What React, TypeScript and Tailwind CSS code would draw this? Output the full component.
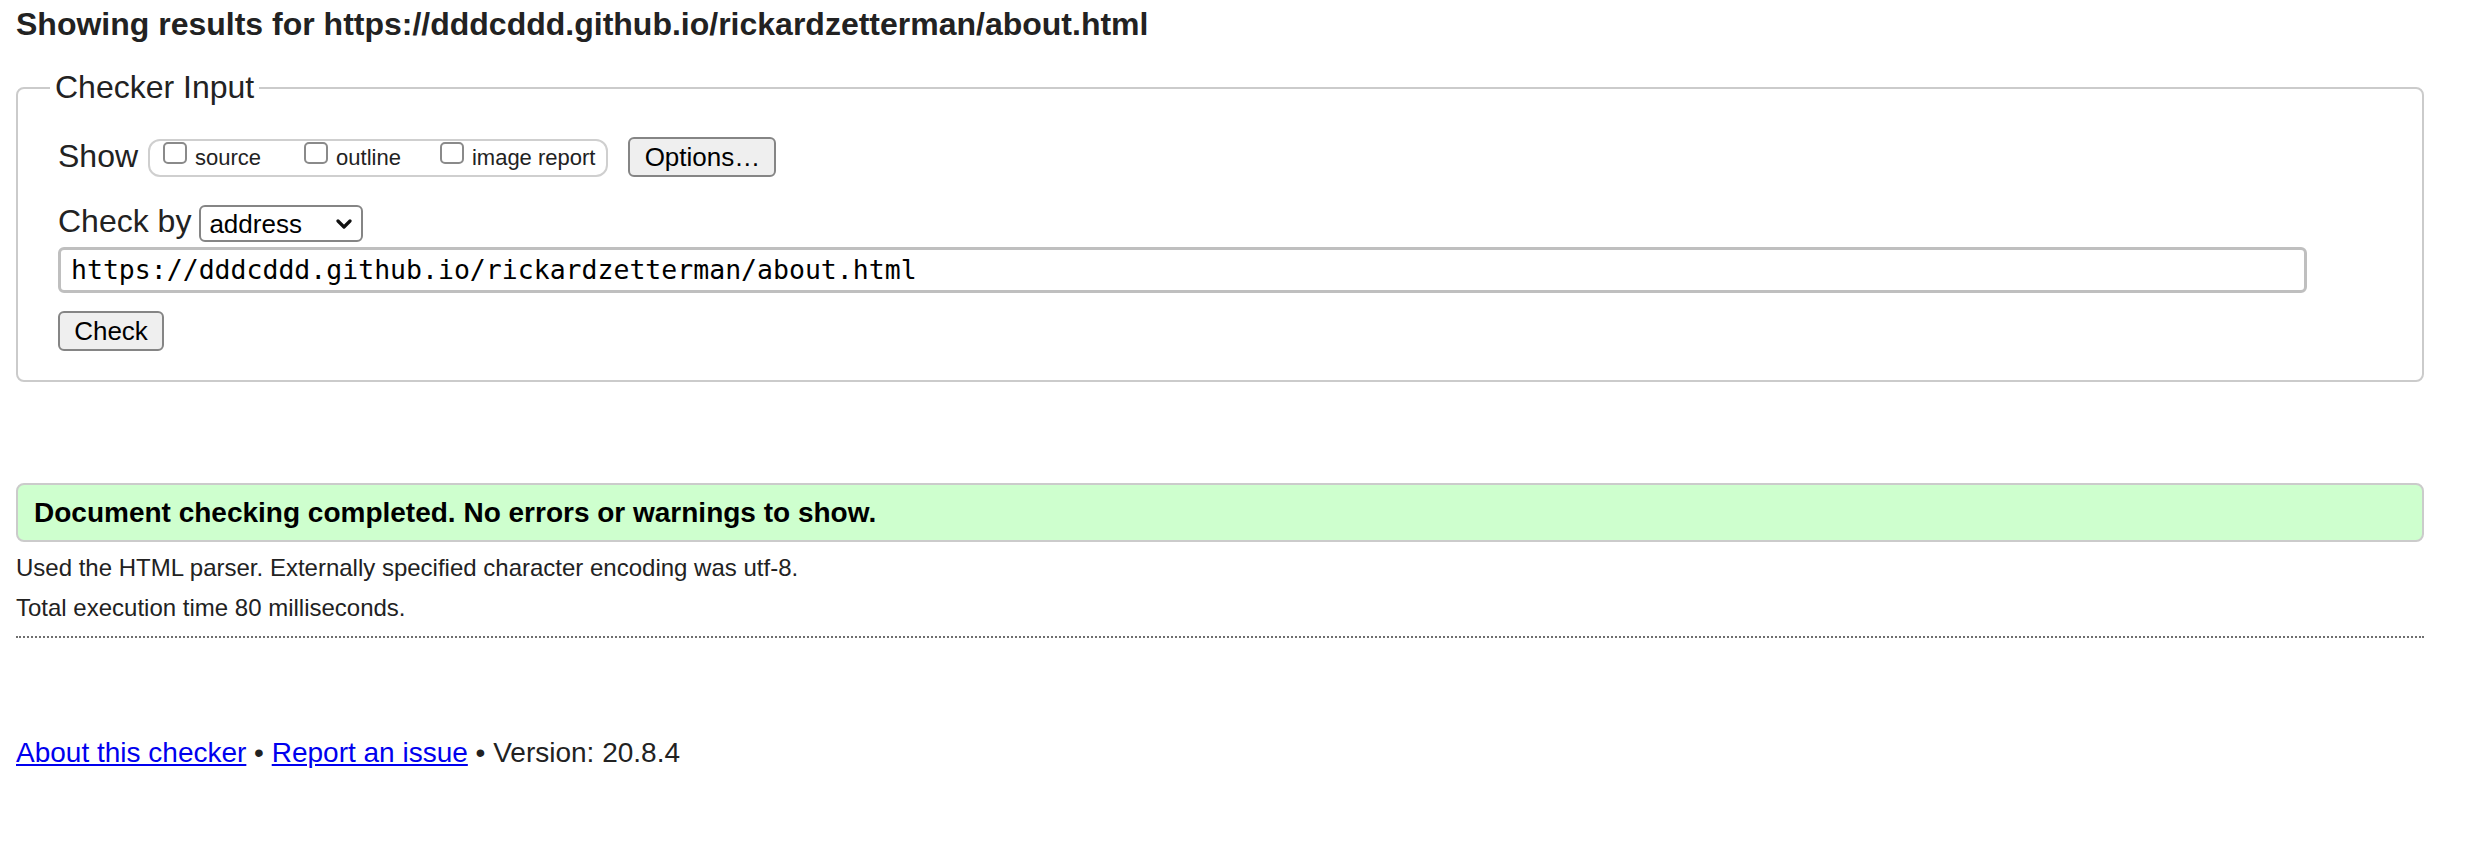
import React from "react";

function Box({ label, className = "" }: { label: string; className?: string }) {
  return (
    <label className={`flex items-start ${className}`}>
      <span className="mt-[1px] h-[22px] w-[24px] rounded-[5px] border-2 border-[#8a8a8a] bg-white" />
      <span className="ml-[8px] mt-[4px] text-[22px] leading-[26px]">{label}</span>
    </label>
  );
}

export default function App() {
  const url = "https://dddcddd.github.io/rickardzetterman/about.html";

  return (
    <div className="min-h-[846px] bg-white pl-[16px] pr-[52px] text-[#222] [font-family:'Liberation_Sans',Arial,sans-serif]">
      <h1 className="mt-[6px] text-[32px] font-bold leading-[37px]">Showing results for {url}</h1>

      {/* checker form */}
      <fieldset className="mt-[26px] rounded-[8px] border-2 border-[#cbcbcb] pb-[29px] pl-[32px]">
        <legend className="px-[5px] text-[32px] leading-[37px]">Checker Input</legend>
        <div className="pl-[8px]">
          <div className="mt-[24px] flex items-start">
            <span className="mt-[8px] text-[32px] leading-[37px]">Show</span>
            <div className="ml-[10px] mt-[9px] flex h-[38px] items-start rounded-[12px] border-2 border-[#cfcfcf] pl-[13px] pr-[11px]">
              <Box label="source" />
              <Box label="outline" className="ml-[43px]" />
              <Box label="image report" className="ml-[39px]" />
            </div>
            <button className="ml-[20px] mt-[7px] h-[40px] w-[148px] rounded-[6px] border-2 border-[#858585] bg-[#efefef] text-[26px] leading-[30px] text-black">
              Options…
            </button>
          </div>

          <div className="mt-[23px] flex items-start">
            <span className="mt-[3px] text-[32px] leading-[37px]">Check by</span>
            <div className="ml-[8px] mt-[5px] flex h-[37px] w-[164px] items-center justify-between rounded-[6px] border-2 border-[#858585] bg-white pl-[8px] pr-[9px] text-[26px] leading-[30px] text-black">
              <span>address</span>
              <svg width="16" height="12" viewBox="0 0 16 12">
                <path d="M2 3 L8 9 L14 3" fill="none" stroke="#111" strokeWidth="3.2" strokeLinecap="round" strokeLinejoin="round" />
              </svg>
            </div>
          </div>

          <div className="mt-[5px] flex h-[46px] w-[2249px] items-center rounded-[6px] border-[3px] border-[#bfbfbf] bg-white pl-[10px] text-[26.5px] text-black [font-family:'DejaVu_Sans_Mono',monospace]">
            {url}
          </div>

          <button className="mt-[18px] h-[40px] w-[106px] rounded-[6px] border-2 border-[#858585] bg-[#efefef] text-[26px] leading-[30px] text-black">
            Check
          </button>
        </div>
      </fieldset>

      {/* result */}
      <div className="mt-[101px] flex h-[59px] items-center rounded-[8px] border-2 border-[#cbcbcb] bg-[#ceffce] pl-[16px]">
        <p className="text-[28px] font-bold leading-[32px] text-black">
          Document checking completed. No errors or warnings to show.
        </p>
      </div>
      <p className="mt-[12px] text-[24px] leading-[28px]">
        Used the HTML parser. Externally specified character encoding was utf-8.
      </p>
      <p className="mt-[12px] text-[24px] leading-[28px]">Total execution time 80 milliseconds.</p>
      <div className="mt-[14px] border-t-2 border-dotted border-[#6f6f6f]" />

      <p className="mt-[99px] text-[28px] leading-[32px]">
        <a href="#" className="text-[#0000ee] underline">About this checker</a> •{" "}
        <a href="#" className="text-[#0000ee] underline">Report an issue</a> • Version: 20.8.4
      </p>
    </div>
  );
}
